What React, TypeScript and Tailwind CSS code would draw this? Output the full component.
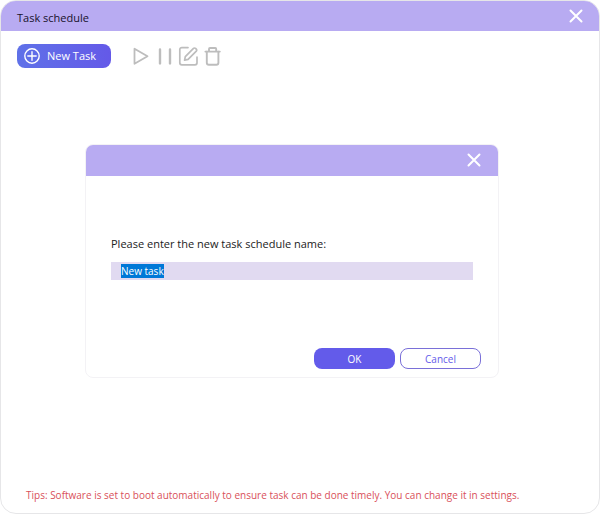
import { useEffect, useRef, useState } from "react";

function CloseIcon() {
  return (
    <svg viewBox="0 0 14 14" className="size-3.5" fill="none" stroke="currentColor" strokeWidth="2" strokeLinecap="round">
      <path d="M1.5 1.5l11 11M12.5 1.5l-11 11" />
    </svg>
  );
}

function PlusCircleIcon() {
  return (
    <svg viewBox="0 0 16 16" className="size-4" fill="none" stroke="currentColor" strokeWidth="1.4" strokeLinecap="round">
      <circle cx="8" cy="8" r="7.2" />
      <path d="M8 3.8v8.4M3.8 8h8.4" />
    </svg>
  );
}

function PlayIcon() {
  return (
    <svg viewBox="0 0 18 20" className="h-5 w-[18px]" fill="none" stroke="currentColor" strokeWidth="1.8" strokeLinejoin="round">
      <path d="M2.5 2.8v15L15.5 10.3z" />
    </svg>
  );
}

function PauseIcon() {
  return (
    <svg viewBox="0 0 18 20" className="h-5 w-[18px]" fill="none" stroke="currentColor" strokeWidth="2.4" strokeLinecap="round">
      <path d="M5 3.4v14M15 3.4v14" />
    </svg>
  );
}

function EditIcon() {
  return (
    <svg viewBox="0 0 20 20" className="size-5" fill="none" stroke="currentColor" strokeWidth="1.7" strokeLinecap="round" strokeLinejoin="round">
      <path d="M10 1.6H3.8a2 2 0 0 0-2 2v13.2a2 2 0 0 0 2 2H17a2 2 0 0 0 2-2v-5.6" />
      <path d="M6.6 14.2l.7-3.6 8.2-8.2a1.4 1.4 0 0 1 2 0l.8.8a1.4 1.4 0 0 1 0 2l-8.2 8.2z" />
    </svg>
  );
}

function TrashIcon() {
  return (
    <svg viewBox="0 0 18 20" className="h-5 w-[18px]" fill="none" stroke="currentColor" strokeWidth="1.9" strokeLinecap="round" strokeLinejoin="round">
      <path d="M2.4 5.6h14.4M6 5.2V3a1 1 0 0 1 1-1h5.2a1 1 0 0 1 1 1v2.2" />
      <path d="M3.8 5.8v11a2 2 0 0 0 2 2h7.6a2 2 0 0 0 2-2v-11" />
    </svg>
  );
}

function NewTaskDialog({ onClose }: { onClose: () => void }) {
  const [name, setName] = useState("New task");
  const inputRef = useRef<HTMLInputElement>(null);

  useEffect(() => {
    inputRef.current?.focus();
    inputRef.current?.select();
  }, []);

  return (
    <div className="absolute inset-0 flex items-center justify-center pt-2 pr-4">
      <div role="dialog" aria-label="New task" className="w-full max-w-[414px] overflow-hidden rounded-lg border border-[#f3f2f5] bg-white">
        <div className="-mx-px -mt-px flex h-8 items-center justify-end bg-[#b8abf2] px-[18px] text-white">
          <button type="button" aria-label="Close" onClick={onClose}>
            <CloseIcon />
          </button>
        </div>

        <form
          onSubmit={(e) => {
            e.preventDefault();
            onClose();
          }}
        >
          <div className="px-[25px] pt-[60px]">
            <label htmlFor="task-name" className="block text-[11px] leading-4 text-[#222222]">
              Please enter the new task schedule name:
            </label>
            <input
              id="task-name"
              ref={inputRef}
              type="text"
              value={name}
              onChange={(e) => setName(e.target.value)}
              className="mt-2.5 block h-[18px] w-full bg-[#e1daf1] px-2.5 text-[10px] leading-3 text-[#222222] outline-none selection:bg-[#0078d7] selection:text-white"
            />
          </div>

          <div className="mt-[68px] flex justify-end gap-[5px] pr-[17px] pb-2">
            <button type="submit" className="h-[21px] w-[81px] rounded-lg bg-[#635bea] text-[10px] leading-4 text-white">
              OK
            </button>
            <button
              type="button"
              onClick={onClose}
              className="h-[21px] w-[81px] rounded-lg border border-[#7a70d8] bg-white text-[10px] leading-4 text-[#635bea]"
            >
              Cancel
            </button>
          </div>
        </form>
      </div>
    </div>
  );
}

export default function App() {
  const [open, setOpen] = useState(true);

  return (
    <div className="bg-white font-['Open_Sans','Noto_Sans',sans-serif]">
      <div className="relative flex min-h-screen flex-col overflow-hidden rounded-2xl border border-[#e6e6e8] bg-white">
        <header className="-mx-px -mt-px flex h-[31px] items-center justify-between bg-[#b8abf2] px-[17px]">
          <h1 className="pt-1 text-[11px] leading-4 text-[#17122b]">Task schedule</h1>
          <button type="button" aria-label="Close" className="text-white">
            <CloseIcon />
          </button>
        </header>

        <div className="flex items-center px-4 pt-[13px]">
          <button
            type="button"
            onClick={() => setOpen(true)}
            className="flex h-6 w-[94px] items-center gap-[7px] rounded-lg bg-linear-to-r from-[#5f71e8] to-[#6459e8] pl-[7px] text-[11px] leading-4 text-white"
          >
            <PlusCircleIcon />
            New Task
          </button>
          <div className="ml-[21px] flex items-center gap-[5px] text-[#bdbdbd]">
            <button type="button" aria-label="Start"><PlayIcon /></button>
            <button type="button" aria-label="Pause"><PauseIcon /></button>
            <button type="button" aria-label="Edit"><EditIcon /></button>
            <button type="button" aria-label="Delete"><TrashIcon /></button>
          </div>
        </div>

        <p className="mt-auto px-[25px] pb-2.5 text-[10px] leading-4 text-[#d9505a]">
          Tips: Software is set to boot automatically to ensure task can be done timely. You can change it in settings.
        </p>

        {open && <NewTaskDialog onClose={() => setOpen(false)} />}
      </div>
    </div>
  );
}
